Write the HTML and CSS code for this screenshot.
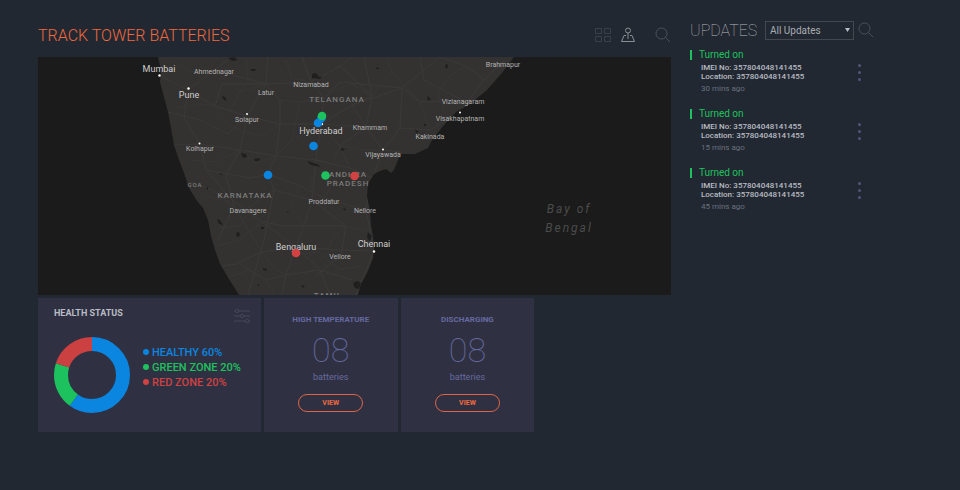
FILE: index.html
```html
<!DOCTYPE html>
<html lang="en">
<head>
    <meta charset="UTF-8">
    <meta name="viewport" content="width=device-width, initial-scale=1.0">
    <title>Track Tower Batteries</title>
    <link rel="stylesheet" href="styles.css">
</head>
<body>
    <div class="page">
        <main>
            <header class="top-bar">
                <h1>TRACK TOWER BATTERIES</h1>
                <div class="tools">
                    <button type="button" class="icon-button faint" aria-label="Grid view">
                        <svg width="16" height="16" viewBox="0 0 16 16"><path d="M.5 1.500h6v5h-6zM9.500 1.500h6v5h-6zM.5 9.500h6v5h-6zM9.500 9.500h6v5h-6z"/></svg>
                    </button>
                    <button type="button" class="icon-button active" aria-label="Map view">
                        <svg width="16" height="16" viewBox="0 0 16 16"><circle cx="8" cy="3.500" r="2.500"/><path d="M8 6v6M6 8.500H4L1.500 14.500h13L12 8.500H10"/></svg>
                    </button>
                    <button type="button" class="icon-button search" aria-label="Search batteries">
                        <svg width="16" height="16" viewBox="0 0 16 16"><circle cx="6.500" cy="6.500" r="5.500"/><path d="M10.500 10.500L15 15"/></svg>
                    </button>
                </div>
            </header>

            <!-- Map -->
            <svg class="map" viewBox="38 57 633 238" preserveAspectRatio="xMidYMid slice" role="img" aria-label="Map of towers in South India">
                <defs>
                    <clipPath id="land">
                        <path id="coast" d="M158 57L161 70 160 82 164 97 168 112 171 128 174 145 179 160 184 173 189 188 197 201 203 208 208 220 211 236 215 250 220 264 229 279 239 295H358L361 284 368 271 373 258 374 248 373 236 371 225 370 210 367 197 368 184 374 174 380 171 386 169 391 173 394 170 398 160 401 154 415 154 428 148 432 140 444 125 456 112 470 104 487 90 502 73 514 57z"/>
                    </clipPath>
                </defs>
                <use href="#coast" class="land"/>
                <g clip-path="url(#land)">
                    <g class="roads">
                        <path d="M160 76L188 90 215 106 247 116 280 124 321 124 366 127 383 150 400 152"/>
                        <path d="M188 90L184 118 200 144 206 170 232 200 262 222 296 247 340 250 374 251"/>
                        <path d="M188 90L214 70 232 57M214 70L266 84 311 82 340 66 352 57"/>
                        <path d="M321 124L316 160 312 200 304 226 296 247 286 275 282 295"/>
                        <path d="M321 124L324 98 311 82 302 57M321 124L352 105 402 88 440 57"/>
                        <path d="M383 150L400 128 430 130 460 112 484 80 505 60"/>
                        <path d="M383 150L370 185 366 210 374 251 356 295"/>
                        <path d="M247 116L240 150 226 176 234 206 218 240M247 116L266 84 268 57"/>
                        <path d="M200 144L240 150 276 156 316 160 350 168 372 178"/>
                        <path d="M206 170L250 178 268 174 300 186 324 198 366 210"/>
                        <path d="M296 247L262 252 236 264 222 266M296 247L320 270 330 295"/>
                        <path d="M248 208L274 190 312 200 346 226 341 255 316 276"/>
                        <path d="M366 127L372 96 364 57M402 88L420 102 462 100M400 128L402 88"/>
                        <path d="M168 112L200 120 228 134 247 116M174 145L200 144M190 182L212 190 234 206"/>
                        <path d="M340 66L372 96 352 105 366 127 340 146 350 168"/>
                        <path d="M280 124L276 156 268 174 274 190 264 240 248 295"/>
                        <path d="M264 222L284 226 304 226 346 226M240 264L266 280 286 275 320 270 352 280"/>
                        <path d="M215 106L222 84 266 84 280 100 280 124M300 102L324 98 340 82 402 88"/>
                        <path d="M420 57L424 80 462 100M440 57L466 66 484 80"/>
                    </g>
                    <g class="roads minor">
                        <path d="M172 60L190 72 214 70 240 92 266 84M176 108L202 104 215 106 232 128 262 136 280 124"/>
                        <path d="M188 160L216 162 240 150 256 164 276 156 292 140 321 124"/>
                        <path d="M204 196L222 200 234 206 252 236 262 252 274 268 286 275M218 246L240 240 262 222"/>
                        <path d="M326 214L324 198 334 180 350 168M328 250L334 236 346 226 366 232"/>
                        <path d="M286 60L292 78 311 82 330 92 352 84 372 96 392 72 386 57M392 72L420 102 430 130"/>
                        <path d="M340 146L366 150 383 150M330 136L340 146 332 164 312 178 312 200M300 186L290 206 304 226"/>
                        <path d="M246 60L248 82 240 92 230 110M280 100L300 102 292 140M302 254L318 252 340 270 360 266"/>
                        <path d="M228 278L248 270 266 280 274 295M218 228L240 226 250 208M444 110L438 92 450 76 466 66"/>
                    </g>
                    <g class="water">
                        <path d="M228 58l6-1 4 3-6 1zM251 69h5l-1 2h-4zM222 96l3 1 2 4-4-2zM312 74l4-1 3 4 3-1-2 3-8-1z"/>
                        <path d="M241 153l5 1 1 3-4 1zM254 159l6-1-1 3h-4zM308 161l5 2 4 1 4 3-6-1-6-2z"/>
                        <path d="M217 219l3 1 3 5-4-1zM237 232l3 1-1 4-3-1zM261 227h3v2h-3zM263 268l4 1-1 2-3-1zM301 285l4 1-2 2zM257 284l3 1-2 1z"/>
                        <path d="M341 148l4 1-2 2-2-1zM427 96l4 3-3 2zM446 64l2 1-1 4-2-2zM415 129l4 3-3 1zM368 232l4 4-2 5-3-3zM424 124h2v2h-2zM343 208l3 1-1 2z"/>
                        <path d="M353 283l4-2 4 2-2 6-4-1zM286 211l3 1-1 1zM206 188l2-1v3zM219 173l4 1-2 1zM375 69l3-2 1 2z"/>
                    </g>
                </g>

                <g class="states">
                    <text x="337" y="102">TELANGANA</text>
                    <text x="348" y="177">ANDHRA</text>
                    <text x="348" y="186">PRADESH</text>
                    <text x="245" y="198">KARNATAKA</text>
                    <text x="195" y="187" class="small">GOA</text>
                    <text x="328" y="298">TAMIL</text>
                </g>
                <g class="sea-name">
                    <text x="569" y="213">Bay of</text>
                    <text x="569" y="232">Bengal</text>
                </g>
                <g class="cities">
                    <text x="214" y="74">Ahmednagar</text>
                    <text x="266" y="95">Latur</text>
                    <text x="311" y="87">Nizamabad</text>
                    <text x="247" y="122">Solapur</text>
                    <text x="200" y="151">Kolhapur</text>
                    <text x="370" y="130">Khammam</text>
                    <text x="383" y="157">Vijayawada</text>
                    <text x="430" y="139">Kakinada</text>
                    <text x="460" y="121">Visakhapatnam</text>
                    <text x="463" y="104">Vizianagaram</text>
                    <text x="503" y="67">Brahmapur</text>
                    <text x="248" y="213">Davanagere</text>
                    <text x="324" y="204">Proddatur</text>
                    <text x="365" y="213">Nellore</text>
                    <text x="340" y="259">Vellore</text>
                </g>
                <g class="cities large">
                    <text x="159" y="72">Mumbai</text>
                    <text x="189" y="98">Pune</text>
                    <text x="321" y="134">Hyderabad</text>
                    <text x="296" y="250">Bengaluru</text>
                    <text x="374" y="247">Chennai</text>
                </g>
                <g class="dots">
                    <circle cx="159.500" cy="75.500" r="1.200"/>
                    <circle cx="188.500" cy="88.500" r="1.200"/>
                    <circle cx="247" cy="114" r="1"/>
                    <circle cx="199.500" cy="143.500" r="1"/>
                    <circle cx="383" cy="149.500" r="1"/>
                    <circle cx="460" cy="112.500" r="1"/>
                    <circle cx="374" cy="251.500" r="1.200"/>
                    <circle cx="322" cy="124" r="1.200"/>
                </g>
                <g class="towers">
                    <circle class="healthy" cx="321.500" cy="118" r="4.300"/>
                    <circle class="healthy" cx="318" cy="123" r="4.300"/>
                    <circle class="green-zone" cx="322" cy="116" r="4.300"/>
                    <circle class="healthy" cx="313.500" cy="146" r="4.300"/>
                    <circle class="healthy" cx="268" cy="175" r="4.300"/>
                    <circle class="green-zone" cx="325.500" cy="175.500" r="4.300"/>
                    <circle class="red-zone" cx="354.500" cy="176" r="4.300"/>
                    <circle class="red-zone" cx="296" cy="253" r="4.300"/>
                </g>
            </svg>

            <!-- Cards -->
            <div class="cards">
                <section class="card status-card">
                    <div class="card-head">
                        <h2>HEALTH STATUS</h2>
                        <button type="button" class="icon-button filter" aria-label="Filter">
                            <svg width="16" height="16" viewBox="0 0 16 16"><path d="M0 3h1.500M5 3h11M0 8h6.500M10 8h6M0 13h11.500M15 13h1"/><circle cx="3.200" cy="3" r="1.700"/><circle cx="8.200" cy="8" r="1.700"/><circle cx="13.200" cy="13" r="1.700"/></svg>
                        </button>
                    </div>
                    <div class="status-body">
                        <svg class="donut" viewBox="0 0 76 76" width="76" height="76" role="img" aria-label="Health status chart">
                            <circle class="healthy" cx="38" cy="38" r="31" pathLength="100" stroke-dasharray="60 40"/>
                            <circle class="green-zone" cx="38" cy="38" r="31" pathLength="100" stroke-dasharray="20 80" stroke-dashoffset="-60"/>
                            <circle class="red-zone" cx="38" cy="38" r="31" pathLength="100" stroke-dasharray="20 80" stroke-dashoffset="-80"/>
                        </svg>
                        <ul class="legend">
                            <li class="healthy">HEALTHY 60%</li>
                            <li class="green-zone">GREEN ZONE 20%</li>
                            <li class="red-zone">RED ZONE 20%</li>
                        </ul>
                    </div>
                </section>
                <section class="card count-card">
                    <h2>HIGH TEMPERATURE</h2>
                    <p class="count">08</p>
                    <p class="unit">batteries</p>
                    <button type="button" class="view-button">VIEW</button>
                </section>
                <section class="card count-card">
                    <h2>DISCHARGING</h2>
                    <p class="count">08</p>
                    <p class="unit">batteries</p>
                    <button type="button" class="view-button">VIEW</button>
                </section>
            </div>
        </main>

        <!-- Updates -->
        <aside>
            <div class="updates-head">
                <h2>UPDATES</h2>
                <select aria-label="Filter updates">
                    <option>All Updates</option>
                </select>
                <button type="button" class="icon-button search" aria-label="Search updates">
                    <svg width="16" height="16" viewBox="0 0 16 16"><circle cx="6.500" cy="6.500" r="5.500"/><path d="M10.500 10.500L15 15"/></svg>
                </button>
            </div>
            <article class="update">
                <h3>Turned on</h3>
                <div class="details">
                    <div>
                        <p>IMEI No: 357804048141455</p>
                        <p>Location: 357804048141455</p>
                    </div>
                    <button type="button" class="more" aria-label="More"><span></span><span></span><span></span></button>
                </div>
                <p class="time">30 mins ago</p>
            </article>
            <article class="update">
                <h3>Turned on</h3>
                <div class="details">
                    <div>
                        <p>IMEI No: 357804048141455</p>
                        <p>Location: 357804048141455</p>
                    </div>
                    <button type="button" class="more" aria-label="More"><span></span><span></span><span></span></button>
                </div>
                <p class="time">15 mins ago</p>
            </article>
            <article class="update">
                <h3>Turned on</h3>
                <div class="details">
                    <div>
                        <p>IMEI No: 357804048141455</p>
                        <p>Location: 357804048141455</p>
                    </div>
                    <button type="button" class="more" aria-label="More"><span></span><span></span><span></span></button>
                </div>
                <p class="time">45 mins ago</p>
            </article>
        </aside>
    </div>
</body>
</html>
```
FILE: styles.css
```css
* {
    box-sizing: border-box;
}
body {
    margin: 0;
    background-color: #222831;
    color: #b9bcc4;
    font-family: Roboto, "Liberation Sans", sans-serif;
    font-size: 8px;
}
h1, h2, h3, p, ul {
    margin: 0;
    padding: 0;
}
button, select {
    font-family: inherit;
    cursor: pointer;
}
.page {
    display: grid;
    grid-template-columns: minmax(0, 1fr) 184px;
    gap: 19px;
    padding: 20px 86px 20px 38px;
}

/* Title row */
.top-bar {
    display: flex;
    align-items: center;
    justify-content: space-between;
    height: 30px;
    margin-bottom: 7px;
}
.top-bar h1 {
    color: #f0693f;
    font-size: 16px;
    font-weight: 300;
}
.tools {
    display: flex;
    align-items: center;
}
.icon-button {
    padding: 0;
    border: none;
    background: none;
    color: #4c5159;
}
.icon-button svg {
    display: block;
    fill: none;
    stroke: currentColor;
}
.icon-button.faint {
    margin-right: 9px;
    color: #3b4048;
}
.icon-button.active {
    margin-right: 19px;
    color: #8b8e93;
}

/* Map */
.map {
    display: block;
    width: 100%;
    height: 238px;
    background-color: #1a1b1a;
}
.map text {
    text-anchor: middle;
}
.land {
    fill: #333231;
}
.roads {
    fill: none;
    stroke: #3b3a39;
    stroke-width: 1;
}
.roads.minor {
    stroke: #383736;
}
.water {
    fill: #1e1f1e;
}
.states {
    fill: #7c7b7a;
    font-size: 8px;
    font-weight: 500;
    letter-spacing: 1px;
}
.states .small {
    font-size: 6px;
}
.sea-name {
    fill: #4b4c4b;
    font-size: 12px;
    font-style: italic;
    letter-spacing: 2px;
}
.cities {
    fill: #b3b2b1;
    font-size: 7px;
}
.cities.large {
    fill: #d0cfce;
    font-size: 9px;
}
.dots {
    fill: #fff;
}
.towers .healthy {
    fill: #0a86e0;
}
.towers .green-zone {
    fill: #1dc25f;
}
.towers .red-zone {
    fill: #d34242;
}

/* Cards */
.cards {
    display: grid;
    grid-template-columns: 5fr 3fr 3fr 3fr;
    gap: 3px;
    margin-top: 3px;
}
.card {
    min-height: 134px;
    background-color: #2f3142;
}
.card h2 {
    font-size: 8px;
    font-weight: 700;
    line-height: 10px;
}
.status-card {
    padding: 10px 11px 18px 16px;
}
.card.status-card h2 {
    font-size: 9px;
}
.card-head {
    display: flex;
    justify-content: space-between;
}
.icon-button.filter {
    color: #45475a;
}
.status-body {
    display: flex;
    align-items: center;
    gap: 13px;
    margin-top: 13px;
}
.donut {
    flex: none;
    transform: rotate(-90deg);
}
.donut circle {
    fill: none;
    stroke-width: 14;
}
.donut .healthy {
    stroke: #0a86e0;
}
.donut .green-zone {
    stroke: #1dc25f;
}
.donut .red-zone {
    stroke: #cb4040;
}
.legend {
    padding-bottom: 16px;
    list-style: none;
    font-size: 11px;
    font-weight: 500;
    line-height: 15px;
    white-space: nowrap;
}
.legend li {
    display: flex;
    align-items: center;
    gap: 3px;
}
.legend li::before {
    content: "";
    width: 6px;
    height: 6px;
    border-radius: 50%;
    background-color: currentColor;
}
.legend .healthy {
    color: #0a86e0;
}
.legend .green-zone {
    color: #1dc25f;
}
.legend .red-zone {
    color: #cf4242;
}
.count-card {
    display: flex;
    flex-direction: column;
    align-items: center;
    padding: 17px 8px;
    color: #6669a0;
}
.count {
    margin-top: 6px;
    font-size: 34px;
    font-weight: 100;
    line-height: 38px;
}
.unit {
    margin-top: 3px;
    font-size: 9px;
    line-height: 10px;
}
.view-button {
    width: 65px;
    height: 18px;
    margin-top: 12px;
    padding: 0;
    border: 1px solid #dd6545;
    border-radius: 9px;
    background: none;
    color: #f0693f;
    font-size: 7px;
    font-weight: 700;
}

/* Updates */
.updates-head {
    display: flex;
    align-items: center;
    gap: 4px;
    height: 20px;
    margin-bottom: 9px;
}
.updates-head h2 {
    margin-right: auto;
    color: #b4b7bd;
    font-size: 16px;
    font-weight: 100;
}
.updates-head select {
    width: 89px;
    height: 19px;
    padding: 0 4px;
    appearance: none;
    border: 1px solid #43484f;
    border-radius: 0;
    background: url("data:image/svg+xml,%3Csvg xmlns='http://www.w3.org/2000/svg' width='5' height='4'%3E%3Cpath d='M0 0h5L2.500 4z' fill='%23b9bcc4'/%3E%3C/svg%3E") no-repeat right 3px center;
    color: #a9acb2;
    font-size: 10px;
}
.update {
    margin-bottom: 14px;
}
.update h3 {
    display: flex;
    align-items: center;
    gap: 7px;
    color: #1dc25f;
    font-size: 10px;
    font-weight: 400;
    line-height: 12px;
}
.update h3::before {
    content: "";
    width: 2px;
    height: 10px;
    background-color: currentColor;
}
.details {
    display: flex;
    align-items: center;
    justify-content: space-between;
    margin-top: 2px;
    padding: 0 12px 0 11px;
    font-weight: 500;
    line-height: 9px;
}
.more {
    display: grid;
    gap: 4px;
    padding: 0 1px;
    border: none;
    background: none;
}
.more span {
    width: 3px;
    height: 3px;
    border-radius: 50%;
    background-color: #50567a;
}
.time {
    margin-top: 3px;
    padding-left: 11px;
    color: #697080;
    line-height: 10px;
}
```
